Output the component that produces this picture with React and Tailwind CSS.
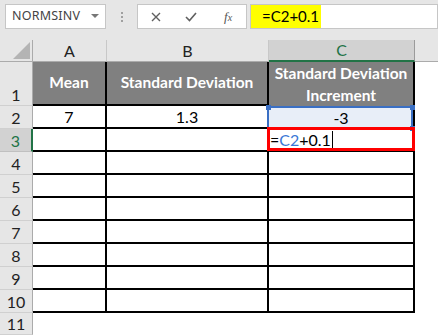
import React from "react";

const rowH = [44, 23, 23, 23, 23, 23, 23, 23, 23, 23, 22];

function RowHead({ n, active }) {
  return (
    <div
      className={
        "flex items-end justify-center pb-[2px] text-[16px] leading-none " +
        (active
          ? "bg-[#d2d2d2] text-[#217346] border-r-2 border-r-[#217346] border-b border-b-[#c0c0c0]"
          : "bg-[#e6e6e6] text-[#222] border-r border-r-[#ababab] border-b border-b-[#d0d0d0]")
      }
    >
      {n}
    </div>
  );
}

export default function App() {
  const font = { fontFamily: "Lato, 'Open Sans', sans-serif" };
  return (
    <div className="w-[438px] h-[335px] overflow-hidden bg-white" style={font}>
      {/* Toolbar */}
      <div className="h-[40px] bg-[#e6e6e6] flex items-start pt-[4px] pl-[5px]">
        <div className="w-[101px] h-[25px] bg-white border border-[#c6c6c6] flex items-center justify-between pl-[6px] pr-[6px]">
          <span className="text-[12.5px] text-[#444] tracking-[0.2px]" style={{ fontFamily: "'Noto Sans', sans-serif" }}>
            NORMSINV
          </span>
          <svg width="8" height="5" viewBox="0 0 8 5">
            <path d="M0 0 L8 0 L4 4 Z" fill="#777" />
          </svg>
        </div>
        <div className="w-[31px] h-[25px] flex flex-col items-center justify-center gap-[2px]">
          <div className="w-[2px] h-[2px] bg-[#a0a0a0]" />
          <div className="w-[2px] h-[2px] bg-[#a0a0a0]" />
          <div className="w-[2px] h-[2px] bg-[#a0a0a0]" />
        </div>
        <div className="w-[110px] h-[25px] bg-white border border-[#c6c6c6] flex items-center">
          <svg className="ml-[13px]" width="10" height="10" viewBox="0 0 10 10">
            <path d="M1 1 L9 9 M9 1 L1 9" stroke="#606060" strokeWidth="1.4" />
          </svg>
          <svg className="ml-[24px]" width="12" height="10" viewBox="0 0 12 10">
            <path d="M1 5 L4.5 8.5 L11 1" stroke="#606060" strokeWidth="1.6" fill="none" />
          </svg>
          <span
            className="ml-[27px] text-[#555] text-[13px] italic leading-none"
            style={{ fontFamily: "'Liberation Serif', serif" }}
          >
            f<span className="text-[10px]">x</span>
          </span>
        </div>
        <div className="ml-[3px] flex-1 h-[25px] bg-white border border-[#c6c6c6] flex items-stretch">
          <div className="w-[70px] bg-[#ffff00] flex items-center pl-[11px] text-[15px] text-black leading-none">
            =C2+0.1
          </div>
        </div>
      </div>

      {/* Sheet */}
      <div
        className="grid grid-cols-[33px_74px_162px_146px_1fr]"
        style={{ gridTemplateRows: `22px ${rowH.map((h) => h + "px").join(" ")}` }}
      >
        <div className="bg-[#e6e6e6] border-r border-r-[#ababab] border-b border-b-[#ababab] relative">
          <svg className="absolute right-[2px] bottom-[2px]" width="17" height="17" viewBox="0 0 17 17">
            <path d="M17 0 L17 17 L0 17 Z" fill="#b4b4b4" />
          </svg>
        </div>
        <div className="bg-[#e6e6e6] border-r border-r-[#c8c8c8] border-b border-b-[#ababab] flex items-center justify-center text-[16px] text-[#222]">
          A
        </div>
        <div className="bg-[#e6e6e6] border-r border-r-[#c8c8c8] border-b border-b-[#ababab] flex items-center justify-center text-[16px] text-[#222]">
          B
        </div>
        <div className="bg-[#d2d2d2] border-r border-r-[#9b9b9b] border-b-2 border-b-[#217346] flex items-center justify-center text-[16px] text-[#217346]">
          C
        </div>
        <div className="bg-[#e6e6e6] border-b border-b-[#ababab]" />

        <RowHead n={1} />
        <div className="bg-[#808080] border-r-2 border-b-2 border-black flex items-center justify-center text-white font-bold text-[15.5px]">
          Mean
        </div>
        <div className="bg-[#808080] border-r-2 border-b-2 border-black flex items-center justify-center text-white font-bold text-[15.5px]">
          Standard Deviation
        </div>
        <div className="bg-[#808080] border-r-2 border-black flex flex-col items-center justify-center text-white font-bold text-[15.5px] leading-[22px]">
          <span>Standard Deviation</span>
          <span>Increment</span>
        </div>
        <div />

        <RowHead n={2} />
        <div className="border-r-2 border-b-2 border-black flex items-center justify-center text-[16px] text-black">7</div>
        <div className="border-r-2 border-b-2 border-black flex items-center justify-center text-[16px] text-black">1.3</div>
        <div className="relative bg-[#e8eef8] border-r-2 border-black flex items-center justify-center text-[16px] text-black">
          -3
          <div className="absolute left-[-2px] top-0 right-0 bottom-0 border-2 border-[#3a6fc4] pointer-events-none" />
          <div className="absolute left-[-3px] top-[-1px] w-[5px] h-[5px] bg-[#3a6fc4]" />
          <div className="absolute right-[-2px] top-[-1px] w-[5px] h-[5px] bg-[#3a6fc4]" />
          <div className="absolute right-[-2px] bottom-[-2px] w-[5px] h-[5px] bg-[#3a6fc4]" />
        </div>
        <div />

        <RowHead n={3} active />
        <div className="border-r-2 border-b-2 border-black" />
        <div className="border-r-2 border-b-2 border-black" />
        <div className="relative border-r-2 border-b-2 border-black flex items-center text-[16px] text-black pl-[1px] leading-none">
          <span>=</span>
          <span className="text-[#3a78d6]">C2</span>
          <span>+0.1</span>
          <span className="inline-block w-[1px] h-[17px] bg-black ml-[1px]" />
          <div className="absolute left-[-2px] top-[-2px] right-[-2px] bottom-[-1px] border-[3px] border-[#ff0000] pointer-events-none" />
        </div>
        <div />

        {[4, 5, 6, 7, 8, 9, 10].map((n) => (
          <React.Fragment key={n}>
            <RowHead n={n} />
            <div className="border-r-2 border-b-2 border-black" />
            <div className="border-r-2 border-b-2 border-black" />
            <div className="border-r-2 border-b-2 border-black" />
            <div />
          </React.Fragment>
        ))}

        <RowHead n={11} />
        <div />
        <div />
        <div />
        <div />
      </div>
    </div>
  );
}
